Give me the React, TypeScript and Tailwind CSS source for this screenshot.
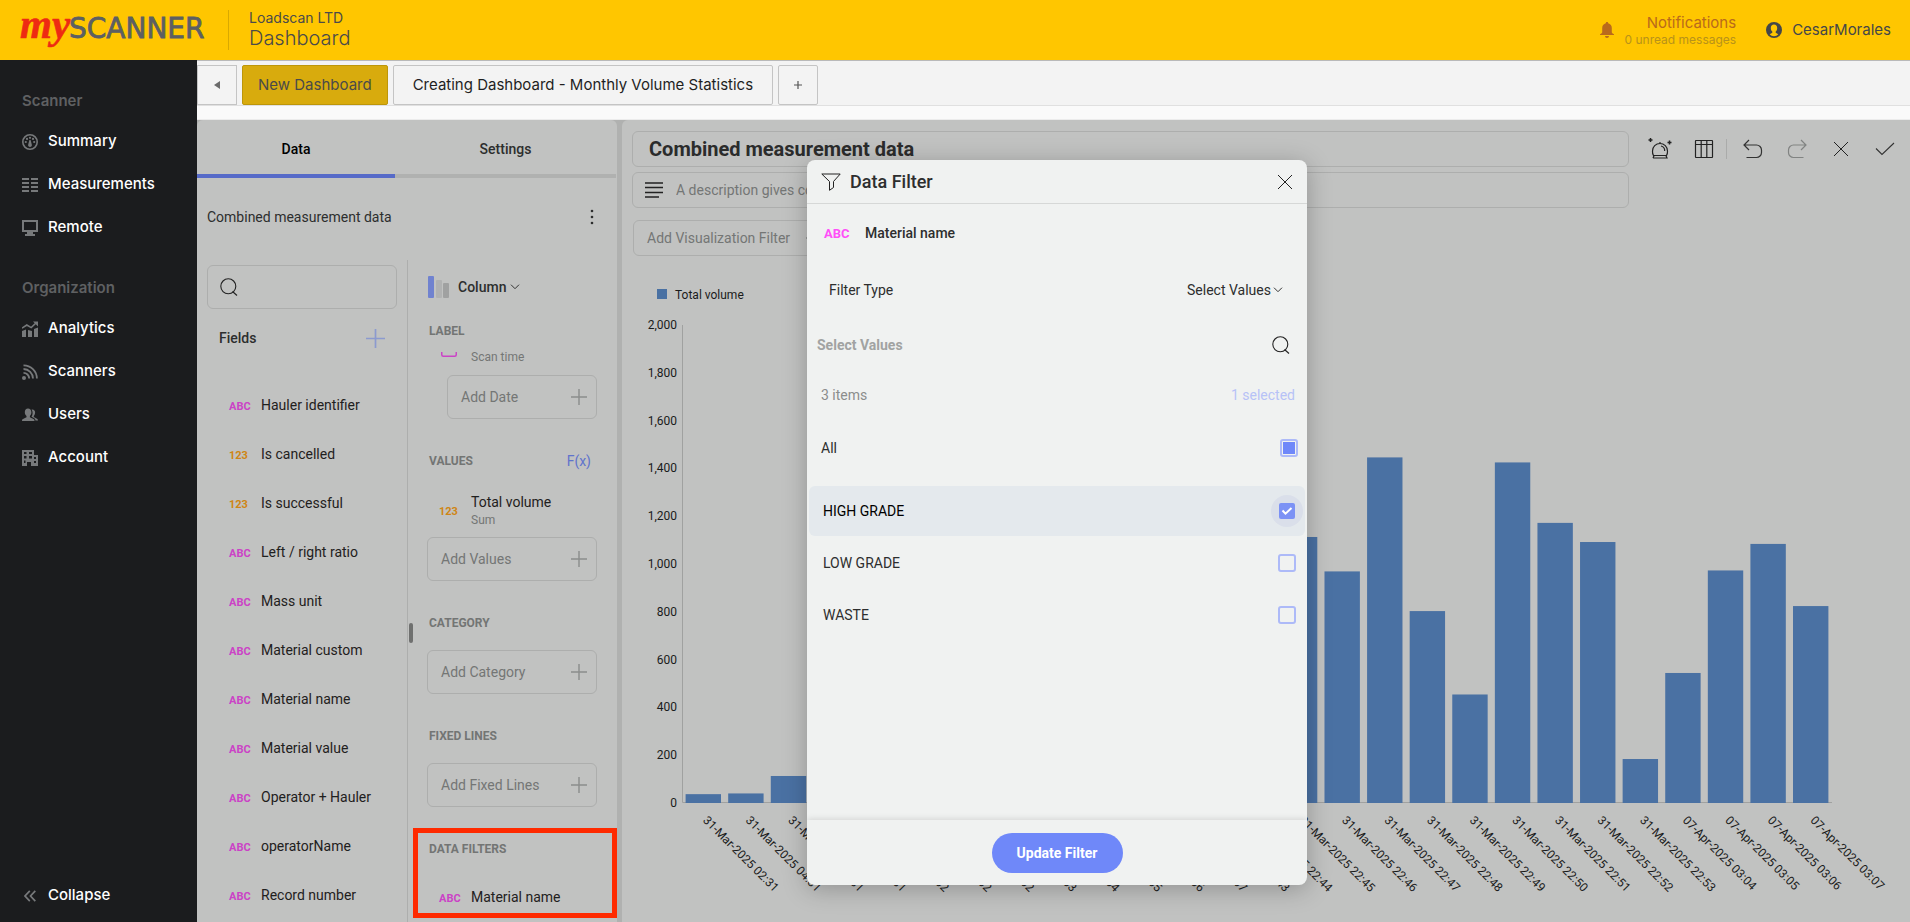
import { useState } from "react";
import type { ReactNode } from "react";

type FieldKind = "text" | "number";

interface Field {
  name: string;
  kind: FieldKind;
}

const fields: Field[] = [
  { name: "Hauler identifier", kind: "text" },
  { name: "Is cancelled", kind: "number" },
  { name: "Is successful", kind: "number" },
  { name: "Left / right ratio", kind: "text" },
  { name: "Mass unit", kind: "text" },
  { name: "Material custom", kind: "text" },
  { name: "Material name", kind: "text" },
  { name: "Material value", kind: "text" },
  { name: "Operator + Hauler", kind: "text" },
  { name: "operatorName", kind: "text" },
  { name: "Record number", kind: "text" },
];

const bars = [
  { label: "31-Mar-2025 02:31", value: 37 },
  { label: "31-Mar-2025 04:31", value: 40 },
  { label: "31-Mar-2025 05:31", value: 113 },
  { label: "31-Mar-2025 06:31", value: 260 },
  { label: "31-Mar-2025 07:02", value: 410 },
  { label: "31-Mar-2025 08:02", value: 380 },
  { label: "31-Mar-2025 09:02", value: 640 },
  { label: "31-Mar-2025 09:03", value: 720 },
  { label: "31-Mar-2025 09:04", value: 530 },
  { label: "31-Mar-2025 09:05", value: 810 },
  { label: "31-Mar-2025 09:06", value: 900 },
  { label: "31-Mar-2025 09:07", value: 760 },
  { label: "31-Mar-2025 22:43", value: 980 },
  { label: "31-Mar-2025 22:44", value: 1050 },
  { label: "31-Mar-2025 22:45", value: 1113 },
  { label: "31-Mar-2025 22:46", value: 969 },
  { label: "31-Mar-2025 22:47", value: 1446 },
  { label: "31-Mar-2025 22:48", value: 803 },
  { label: "31-Mar-2025 22:49", value: 454 },
  { label: "31-Mar-2025 22:50", value: 1425 },
  { label: "31-Mar-2025 22:51", value: 1172 },
  { label: "31-Mar-2025 22:52", value: 1092 },
  { label: "31-Mar-2025 22:53", value: 184 },
  { label: "07-Apr-2025 03:04", value: 544 },
  { label: "07-Apr-2025 03:05", value: 973 },
  { label: "07-Apr-2025 03:06", value: 1084 },
  { label: "07-Apr-2025 03:07", value: 824 },
];

const ticks = [0, 200, 400, 600, 800, 1000, 1200, 1400, 1600, 1800, 2000];

/* ---------- icons ---------- */

const navIcons: Record<string, ReactNode> = {
  Summary: (
    <>
      <circle cx="8" cy="8" r="7.2" fill="none" stroke="currentColor" strokeWidth="1.6" />
      <circle cx="8" cy="3.8" r="1.1" />
      <circle cx="5" cy="4.9" r="1.1" />
      <circle cx="11" cy="4.9" r="1.1" />
      <circle cx="3.8" cy="8" r="1.1" />
      <circle cx="12.2" cy="8" r="1.1" />
      <path d="M7.4 6h1.2l1.2 4.6a1.9 1.9 0 1 1-3.6 0z" />
    </>
  ),
  Measurements: (
    <path d="M0 1h7v2H0zM9 1h7v2H9zM0 5h7v2H0zM9 5h7v2H9zM0 9h7v2H0zM9 9h7v2H9zM0 13h7v2H0zM9 13h7v2H9z" />
  ),
  Remote: <path fillRule="evenodd" d="M0 0h16v12h-5v2h2v2H3v-2h2v-2H0zM2 2v8h12V2z" />,
  Analytics: (
    <>
      <path d="M0 10l4-1.5V16H0zM6 9l4 1v6H6zM12 8l4-1.5V16h-4z" />
      <path d="M0 7.2L4.8 4l4.4 2.6L14 2" fill="none" stroke="currentColor" strokeWidth="1.6" />
      <path d="M11 .5h5v5z" />
    </>
  ),
  Scanners: (
    <>
      <circle cx="2" cy="14" r="2" />
      <path
        d="M1.5 8.8A5.8 5.8 0 0 1 7.2 14.5M1.5 5A9.5 9.5 0 0 1 11 14.5M1.5 1.3A13.3 13.3 0 0 1 14.9 14.5"
        fill="none"
        stroke="currentColor"
        strokeWidth="1.8"
      />
    </>
  ),
  Users: (
    <>
      <path d="M6 1.5c2 0 3.4 1.4 3.4 3.8 0 1.8-.8 3-1.5 3.8v1.1L11.5 12c.8.4 1 1 1 2H0c0-1 .2-1.6 1-2l3.5-1.8V9.1C3.6 8.3 2.8 7.1 2.8 5.3 2.8 2.9 4 1.5 6 1.5z" />
      <path d="M9.6 2.6c2.3-.4 3.5 1.1 3.5 3 0 1.6-.6 2.6-1.3 3.4v1l3.2 1.7c.7.4 1 1 1 1.8h-2.6c0-1.5-.5-2.1-1.5-2.6L9.5 9.7c1.3-1.6 1.7-4.7.1-7.1z" />
    </>
  ),
  Account: (
    <path
      fillRule="evenodd"
      d="M0 0h12v5h4v11H9v-4H5v4H0zM2 2v2h2.5V2zM7 2v2h3V2zM2 6v2.5h2.5V6zM7 6v2.5h3V6zM2 10.5V13h1.5v-2.5zM12 7v2h2V7zM12 11v2h2v-2z"
    />
  ),
};

function SearchIcon() {
  return (
    <svg viewBox="0 0 18 18" className="size-[18px] shrink-0" fill="none" stroke="#222" strokeWidth="1.1">
      <circle cx="8.3" cy="8.3" r="7.5" />
      <path d="M12.5 13.5l4.5 4" />
    </svg>
  );
}

function Plus({ className }: { className: string }) {
  return (
    <svg viewBox="0 0 18 18" className={className} fill="none" stroke="currentColor" strokeWidth="1.6">
      <path d="M9 0v18M0 9h18" />
    </svg>
  );
}

function Chevron() {
  return (
    <svg viewBox="0 0 10 6" className="pointer-events-none h-[6px] w-[10px]" fill="none" stroke="#333" strokeWidth="1">
      <path d="M1 .7l4 4 4-4" />
    </svg>
  );
}

function CloseIcon() {
  return (
    <svg viewBox="0 0 16 16" className="size-4" fill="none" stroke="#222" strokeWidth="1">
      <path d="M1 1l14 14M15 1L1 15" />
    </svg>
  );
}

function KindBadge({ kind, dim = true }: { kind: FieldKind; dim?: boolean }) {
  const color = kind === "number" ? "text-[#cf8515]" : dim ? "text-[#cb43c6]" : "text-[#ff4ff8]";
  const size = dim ? "text-[11px]" : "text-[13px]";
  return <span className={`font-bold leading-4 ${size} ${color}`}>{kind === "number" ? "123" : "ABC"}</span>;
}

/* ---------- page chrome ---------- */

function Header() {
  return (
    <header className="flex h-[60px] shrink-0 items-center bg-[#ffc600] pr-[19px] pl-5 text-[#4a4a4a]">
      <a href="#home" aria-label="myScanner" className="flex h-10 w-[209px] items-center border-r border-[#d9a900]">
        <svg viewBox="0 0 200 60" className="h-[60px] w-[200px] shrink-0">
          <text
            x="49"
            y="38"
            fontFamily="'DejaVu Sans', sans-serif"
            fontSize="28"
            fill="#5d5f62"
            stroke="#5d5f62"
            strokeWidth="0.8"
          >
            SCANNER
          </text>
          <text
            x="0"
            y="38"
            fontFamily="'Liberation Serif', serif"
            fontSize="41"
            fontWeight="bold"
            fontStyle="italic"
            fill="#ee2a12"
            stroke="#ee2a12"
            strokeWidth="0.6"
          >
            my
          </text>
        </svg>
      </a>
      <div className="flex flex-col pl-5">
        <span className="text-sm leading-4">Loadscan LTD</span>
        <h1 className="text-xl font-light leading-6">Dashboard</h1>
      </div>
      <button className="ml-auto flex items-center gap-[11px]">
        <svg viewBox="0 0 14 16" className="h-4 w-[14px]" fill="#b96a1c">
          <path d="M7 0c.8 0 1.2.5 1.2 1.2C10.5 1.8 11.8 3.5 11.8 6v4c0 1 .8 1.7 2.2 2.2V13H0v-.8C1.4 11.7 2.2 11 2.2 10V6c0-2.5 1.3-4.2 3.6-4.8C5.8.5 6.2 0 7 0zM5 14h4c0 1.2-.9 2-2 2s-2-.8-2-2z" />
        </svg>
        <span className="flex flex-col items-end">
          <span className="text-[15px] leading-5 text-[#b96a1c]">Notifications</span>
          <span className="text-xs leading-[14px] text-[#b8921a]">0 unread messages</span>
        </span>
      </button>
      <button className="ml-[30px] flex items-center gap-[10px] text-[15px] text-[#444649]">
        <svg viewBox="0 0 16 16" className="size-4">
          <circle cx="8" cy="8" r="8" fill="#444649" />
          <path
            d="M8 2.5c2 0 3.2 1.4 3.2 3.5 0 1.7-.7 2.8-1.5 3.6v1.2l2.6 1.5C11.3 13.5 9.7 14.3 8 14.3s-3.3-.8-4.3-2l2.6-1.5V9.6C5.5 8.8 4.8 7.7 4.8 6c0-2.1 1.2-3.5 3.2-3.5z"
            fill="#ffc600"
          />
        </svg>
        CesarMorales
      </button>
    </header>
  );
}

function NavGroup({ title, items }: { title: string; items: string[] }) {
  return (
    <section className="mb-[21px]">
      <h2 className="flex h-[37px] items-center pl-[22px] text-[15px] font-semibold text-[#5f6062]">{title}</h2>
      {items.map(item => (
        <a
          key={item}
          href={`#${item.toLowerCase()}`}
          className="flex h-[43px] items-center gap-[10px] pl-[22px] text-[15px] font-medium text-white"
        >
          <svg viewBox="0 0 16 16" className="size-4" fill="currentColor" color="#77797b">
            {navIcons[item]}
          </svg>
          {item}
        </a>
      ))}
    </section>
  );
}

function Sidebar() {
  return (
    <nav className="flex w-[197px] shrink-0 flex-col bg-[#1b1c1e] pt-[23px]">
      <NavGroup title="Scanner" items={["Summary", "Measurements", "Remote"]} />
      <NavGroup title="Organization" items={["Analytics", "Scanners", "Users", "Account"]} />
      <button className="mt-auto mb-[5px] flex h-[43px] items-center gap-3 pl-6 text-[15px] font-medium text-white">
        <svg viewBox="0 0 12 12" className="size-3" fill="none" stroke="#77797b" strokeWidth="1.7">
          <path d="M5.8.8L1 6l4.8 5.2M11.3.8L6.5 6l4.8 5.2" />
        </svg>
        Collapse
      </button>
    </nav>
  );
}

function DashboardTabs() {
  return (
    <div className="shrink-0 border-t border-[#b9b9b9] bg-[#f3f3f3]">
      <div className="flex gap-[5px] border-b border-[#e0e0e0] pt-1 text-[15px] text-[#1f1f1f]">
        <button aria-label="Previous" className="flex h-10 w-10 items-center justify-center border border-[#c4c4c4]">
          <svg viewBox="0 0 6 8" className="h-2 w-[6px]" fill="#6b6b6b">
            <path d="M6 0v8L0 4z" />
          </svg>
        </button>
        <button className="h-10 rounded-[2px] border border-[#bd9609] bg-[#d8ab0d] px-[15px] text-[#4a4a4a]">
          New Dashboard
        </button>
        <button className="h-10 rounded-[2px] border border-[#c4c4c4] px-[19px]">
          Creating Dashboard - Monthly Volume Statistics
        </button>
        <button aria-label="Add tab" className="flex h-10 w-10 items-center justify-center rounded-[2px] border border-[#c4c4c4]">
          <svg viewBox="0 0 8 8" className="size-2" stroke="#555" strokeWidth="1.2">
            <path d="M4 0v8M0 4h8" />
          </svg>
        </button>
      </div>
      <div className="h-[14px] border-b border-[#ececec] bg-[#fafafa]" />
    </div>
  );
}

/* ---------- data panel ---------- */

function AddBox({ label, indent = false }: { label: string; indent?: boolean }) {
  return (
    <button
      className={`mr-5 flex h-11 items-center justify-between rounded-md border border-[#adaead] pr-[9px] pl-[13px] text-[#747675] ${
        indent ? "ml-[39px]" : "ml-[19px]"
      }`}
    >
      {label}
      <Plus className="size-4 text-[#8b8d8c]" />
    </button>
  );
}

function SectionTitle({ children, action }: { children: ReactNode; action?: ReactNode }) {
  return (
    <div className="mt-[26px] flex h-8 items-center justify-between pr-[26px] pl-[21px]">
      <h3 className="text-xs font-bold text-[#737574]">{children}</h3>
      {action}
    </div>
  );
}

function ShelfItem({ kind, name, detail }: { kind: FieldKind; name: string; detail?: string }) {
  return (
    <div className="flex h-9 items-center pl-[31px]">
      <span className="w-8">
        <KindBadge kind={kind} />
      </span>
      <div className="flex flex-col">
        <span className="leading-5 text-[#1f2020]">{name}</span>
        {detail && <span className="text-xs leading-4 text-[#747675]">{detail}</span>}
      </div>
    </div>
  );
}

function DataPanel() {
  return (
    <aside className="flex w-[420px] shrink-0 flex-col overflow-hidden rounded-t-md bg-[#c1c2c1] text-sm">
      <div className="flex shrink-0 font-medium" role="tablist">
        <button role="tab" aria-selected="true" className="h-[58px] w-[198px] border-b-4 border-[#566ac8] pt-1 text-black">
          Data
        </button>
        <button role="tab" aria-selected="false" className="mr-px h-[58px] flex-1 border-b-4 border-[#b0b1b0] pt-1 text-[#2d2e2e]">
          Settings
        </button>
      </div>
      <div className="flex h-[78px] shrink-0 items-center justify-between pr-[21px] pl-[10px] text-[#2d2e2e]">
        Combined measurement data
        <button aria-label="More" className="flex h-6 w-2 items-center justify-center">
          <svg viewBox="0 0 4 16" className="h-4 w-1" fill="#2d2e2e">
            <circle cx="2" cy="2" r="1.3" />
            <circle cx="2" cy="8" r="1.3" />
            <circle cx="2" cy="14" r="1.3" />
          </svg>
        </button>
      </div>
      <div className="mt-1 flex min-h-0 flex-1">
        <div className="w-[210px] shrink-0 overflow-hidden pt-[5px]">
          <label className="ml-[10px] flex h-11 w-[190px] items-center gap-2 rounded-md border border-[#adaead] pl-3">
            <SearchIcon />
            <input type="search" aria-label="Search fields" className="w-full bg-transparent outline-none" />
          </label>
          <div className="flex h-[58px] items-center justify-between pr-[22px] pl-[22px] font-medium text-[#2d2e2e]">
            Fields
            <button aria-label="Add field">
              <Plus className="size-[19px] text-[#8c9acf]" />
            </button>
          </div>
          <ul className="mt-[13px]">
            {fields.map(field => (
              <li key={field.name} className="flex h-[49px] items-center pl-8 text-[#1f2020]">
                <span className="w-8">
                  <KindBadge kind={field.kind} />
                </span>
                {field.name}
              </li>
            ))}
          </ul>
        </div>

        <div className="relative flex min-w-0 flex-1 flex-col border-l border-[#adaead]">
          <div className="flex h-[54px] shrink-0 items-center pl-5">
            <svg viewBox="0 0 22 22" className="size-[22px]">
              <rect x="0" y="0" width="6" height="22" rx="1" fill="#7082cf" />
              <rect x="8" y="4" width="6" height="18" rx="1" fill="#b1b2b2" />
              <rect x="15" y="7" width="6" height="15" rx="1" fill="#a0a1a1" />
            </svg>
            <label className="ml-2 flex items-center gap-[3px]">
              <select
                aria-label="Visualization"
                className="appearance-none bg-transparent font-medium text-[#2d2e2e] outline-none"
              >
                <option>Column</option>
              </select>
              <Chevron />
            </label>
          </div>
          <h3 className="flex h-[34px] shrink-0 items-center pl-[21px] text-xs font-bold text-[#737574]">LABEL</h3>
          {/* scrolled shelf: only the lower edge of the date icon shows */}
          <div className="mt-1 flex h-[23px] shrink-0 items-start pl-[33px]">
            <div className="flex h-[5px] items-end overflow-hidden">
              <svg viewBox="0 0 16 16" className="size-4 shrink-0" fill="none" stroke="#cb43c6" strokeWidth="1.5">
                <rect x=".75" y="1" width="14.5" height="14.2" rx="1.5" />
              </svg>
            </div>
            <span className="ml-[14px] text-xs leading-[10px] text-[#747675]">Scan time</span>
          </div>
          <AddBox label="Add Date" indent />
          <SectionTitle action={<button className="text-sm text-[#5f73cc]">F(x)</button>}>VALUES</SectionTitle>
          <div className="mt-[15px] mb-[9px]">
            <ShelfItem kind="number" name="Total volume" detail="Sum" />
          </div>
          <AddBox label="Add Values" />
          <SectionTitle>CATEGORY</SectionTitle>
          <div className="mt-[11px] flex flex-col">
            <AddBox label="Add Category" />
          </div>
          <SectionTitle>FIXED LINES</SectionTitle>
          <div className="mt-[11px] flex flex-col">
            <AddBox label="Add Fixed Lines" />
          </div>
          <section className="relative">
            <SectionTitle>DATA FILTERS</SectionTitle>
            <div className="mt-[14px]">
              <ShelfItem kind="text" name="Material name" />
            </div>
            <div className="pointer-events-none absolute top-[21px] right-0 bottom-[-3px] left-[5px] border-[5px] border-[#ff2a00]" />
          </section>
          {/* splitter grip */}
          <div className="absolute top-[363px] left-px h-5 w-1 rounded-full bg-[#6f706f]" />
        </div>
      </div>
    </aside>
  );
}

/* ---------- visualization ---------- */

function Toolbar() {
  const button = "flex h-9 w-11 items-center justify-center";
  const svg = "size-6";
  return (
    <div className="flex shrink-0 pr-[3px] pl-[9px]">
      <button aria-label="Suggest" className={button}>
        <svg viewBox="0 0 24 24" className={svg} fill="none" stroke="#222" strokeWidth="1.2">
          <path d="M5.5 18.5h13a8 8 0 0 0 1-4.5 7.5 7.5 0 0 0-15 0 8 8 0 0 0 1 4.5zM5 21h14l-1-2.3M6 18.7L5 21" />
          <path d="M13 9a5 5 0 0 1 3.7 5M12 5v1.5" />
          <path d="M2.5 1v4M.5 3h4M21.5 3.5v4M19.5 5.5h4" strokeWidth="1.5" />
        </svg>
      </button>
      <button aria-label="Show data" className={button}>
        <svg viewBox="0 0 24 24" className={svg} fill="none" stroke="#222" strokeWidth="1.2">
          <rect x="3.5" y="3.5" width="17" height="17" rx=".5" />
          <path d="M3.5 7.5h17M9.2 3.5v17M14.8 3.5v17" />
        </svg>
      </button>
      <div className="mt-2 mr-1 h-5 w-px bg-[#aaabaa]" />
      <button aria-label="Undo" className={button}>
        <svg viewBox="0 0 24 24" className={svg} fill="none" stroke="#333" strokeWidth="1.2">
          <path d="M8 3L3 8l5 5M3 8h12.5a5 5 0 0 1 5 5v2.5a5 5 0 0 1-5 5H5.5" />
        </svg>
      </button>
      <button aria-label="Redo" className={button}>
        <svg viewBox="0 0 24 24" className={svg} fill="none" stroke="#818382" strokeWidth="1.2">
          <path d="M16 3l5 5-5 5M21 8H8.5a5 5 0 0 0-5 5v2.5a5 5 0 0 0 5 5h10" />
        </svg>
      </button>
      <button aria-label="Discard" className={button}>
        <CloseIcon />
      </button>
      <button aria-label="Apply" className={button}>
        <svg viewBox="0 0 20 14" className="h-[14px] w-5" fill="none" stroke="#333" strokeWidth="1.1">
          <path d="M1 6.5l6 6L19 1" />
        </svg>
      </button>
    </div>
  );
}

function ColumnChart() {
  const left = 60;
  const baseline = 547;
  const plotWidth = 1150;
  const plotHeight = 478;
  const band = plotWidth / bars.length;

  return (
    <svg viewBox="0 0 1288 666" className="w-full shrink-0" fontFamily="Roboto, sans-serif" fontSize="12" fill="#1a1b1b">
      <rect x="35" y="33" width="10" height="10" fill="#4a71a3" />
      <text x="53" y="43">Total volume</text>
      {ticks.map(tick => (
        <text key={tick} x="55" y={baseline + 4 - (tick / 2000) * plotHeight} textAnchor="end">
          {tick.toLocaleString("en-US")}
        </text>
      ))}
      <path d={`M${left + 0.5} ${baseline - plotHeight}V${baseline - 0.5}H${left + plotWidth}`} fill="none" stroke="#a0a1a0" />
      {bars.map((bar, i) => {
        const x = left + i * band;
        const height = (bar.value / 2000) * plotHeight;
        const cx = x + band / 2;
        return (
          <g key={bar.label}>
            <rect x={x + 3.6} y={baseline - height} width={band - 7.2} height={height} fill="#4a71a3" />
            <text transform={`translate(${cx - 1} ${baseline + 18}) rotate(45)`}>{bar.label}</text>
          </g>
        );
      })}
    </svg>
  );
}

function Visualization() {
  return (
    <main className="flex min-w-0 flex-1 flex-col overflow-hidden rounded-tl-md bg-[#c1c2c1] pt-[11px] text-sm">
      <div className="flex shrink-0">
        <div className="ml-[10px] flex flex-1 flex-col gap-[5px]">
          <input
            aria-label="Title"
            defaultValue="Combined measurement data"
            className="h-9 rounded-md border border-[#adaead] bg-transparent px-4 text-xl font-bold text-[#2b2c2c] outline-none"
          />
          <label className="flex h-9 items-center gap-[13px] rounded-md border border-[#adaead] pl-3">
            <svg viewBox="0 0 18 16" className="h-4 w-[18px]" stroke="#222" strokeWidth="1.3">
              <path d="M0 1h18M0 5.500h18M0 10.500h18M0 15h14" />
            </svg>
            <input
              aria-label="Description"
              placeholder="A description gives context to your visualization"
              className="flex-1 bg-transparent outline-none placeholder:text-[#747675]"
            />
          </label>
        </div>
        <Toolbar />
      </div>
      <button className="mt-3 ml-[11px] flex h-9 items-center gap-4 self-start rounded-md border border-[#adaead] px-[13px] text-[#747675]">
        Add Visualization Filter
        <Plus className="size-4 text-[#8b8d8c]" />
      </button>
      <ColumnChart />
    </main>
  );
}

/* ---------- data filter dialog ---------- */

const values = ["HIGH GRADE", "LOW GRADE", "WASTE"];

function DataFilterDialog() {
  const [selected, setSelected] = useState<string[]>(["HIGH GRADE"]);

  const toggle = (value: string) => {
    setSelected(prev => (prev.includes(value) ? prev.filter(v => v !== value) : [...prev, value]));
  };

  const toggleAll = () => setSelected(selected.length ? [] : values);

  return (
    <div className="absolute inset-0 flex justify-center pt-10 pb-[37px] pl-[7px]">
      <div
        role="dialog"
        aria-labelledby="filter-title"
        className="flex w-[500px] flex-col overflow-hidden rounded-lg bg-[#f0f2f1] text-sm text-[#2d2e2e] shadow-[0_4px_24px_rgba(0,0,0,0.25)]"
      >
        <div className="flex h-11 shrink-0 items-center border-b border-[#d6d8d7] px-[14px]">
          <svg viewBox="0 0 20 18" className="h-[18px] w-5" fill="none" stroke="#222" strokeWidth="1">
            <path d="M.8 1h18.4l-6.7 7.5v6L8.5 17.3V8.5z" />
          </svg>
          <h2 id="filter-title" className="ml-[9px] text-lg font-medium">
            Data Filter
          </h2>
          <button aria-label="Close" className="ml-auto">
            <CloseIcon />
          </button>
        </div>

        <div className="flex h-[58px] shrink-0 items-center pl-[17px] font-medium">
          <span className="w-[41px]">
            <KindBadge kind="text" dim={false} />
          </span>
          Material name
        </div>

        <div className="flex h-14 shrink-0 items-center justify-between pr-6 pl-[22px]">
          <label htmlFor="filter-type">Filter Type</label>
          <div className="flex items-center gap-[2px]">
            <select id="filter-type" className="appearance-none bg-transparent outline-none">
              <option>Select Values</option>
            </select>
            <Chevron />
          </div>
        </div>

        <div className="flex h-[54px] shrink-0 items-center justify-between pr-[17px] pl-[10px] font-bold text-[#a1a3a2]">
          Select Values
          <button aria-label="Search values">
            <SearchIcon />
          </button>
        </div>

        <div className="flex h-[46px] shrink-0 items-center justify-between pr-3 pl-[14px] text-[#8b8d8c]">
          <span>{values.length} items</span>
          <span className="text-[#b7c2f7]">{selected.length} selected</span>
        </div>

        <label className="flex h-[60px] shrink-0 items-center justify-between pr-[9px] pl-[14px]">
          All
          <input
            type="checkbox"
            checked={selected.length > 0}
            onChange={toggleAll}
            className="size-[18px] appearance-none rounded-[3px] border-2 border-[#adbaf8] bg-clip-content p-px checked:bg-[#6f88f9]"
          />
        </label>

        <ul className="mt-2 flex flex-1 flex-col gap-[2px] px-[2px]">
          {values.map(value => {
            const on = selected.includes(value);
            return (
              <li key={value}>
                <label
                  className={`flex h-[50px] items-center justify-between rounded-md pr-[2px] pl-[14px] ${
                    on ? "bg-[#e4e9ed] text-black" : ""
                  }`}
                >
                  {value}
                  <span className={`relative flex size-8 items-center justify-center rounded-full ${on ? "bg-[#dadfea]" : ""}`}>
                    <input
                      type="checkbox"
                      checked={on}
                      onChange={() => toggle(value)}
                      className="size-[18px] appearance-none rounded-[3px] border-2 border-[#adbaf8] checked:size-4 checked:rounded-[2px] checked:border-0 checked:bg-[#7c92f5]"
                    />
                    {on && (
                      <svg viewBox="0 0 12 12" className="pointer-events-none absolute size-3" fill="none" stroke="#fff" strokeWidth="2">
                        <path d="M1.5 5.5l3 3.2L10.5 3" />
                      </svg>
                    )}
                  </span>
                </label>
              </li>
            );
          })}
        </ul>

        <div className="flex h-[65px] shrink-0 items-center justify-center shadow-[0_-1px_6px_rgba(0,0,0,0.12)]">
          <button className="h-10 w-[131px] rounded-[20px] bg-[#6f88f9] font-bold text-white">Update Filter</button>
        </div>
      </div>
    </div>
  );
}

export default function App() {
  return (
    <div className="flex h-screen flex-col overflow-hidden font-[Inter,sans-serif]">
      <Header />
      <div className="flex min-h-0 flex-1">
        <Sidebar />
        <div className="flex min-w-0 flex-1 flex-col">
          <DashboardTabs />
          <div className="relative flex min-h-0 flex-1 gap-[5px] bg-[#b0b1b0] font-[Roboto,sans-serif]">
            <DataPanel />
            <Visualization />
            <DataFilterDialog />
          </div>
        </div>
      </div>
    </div>
  );
}
